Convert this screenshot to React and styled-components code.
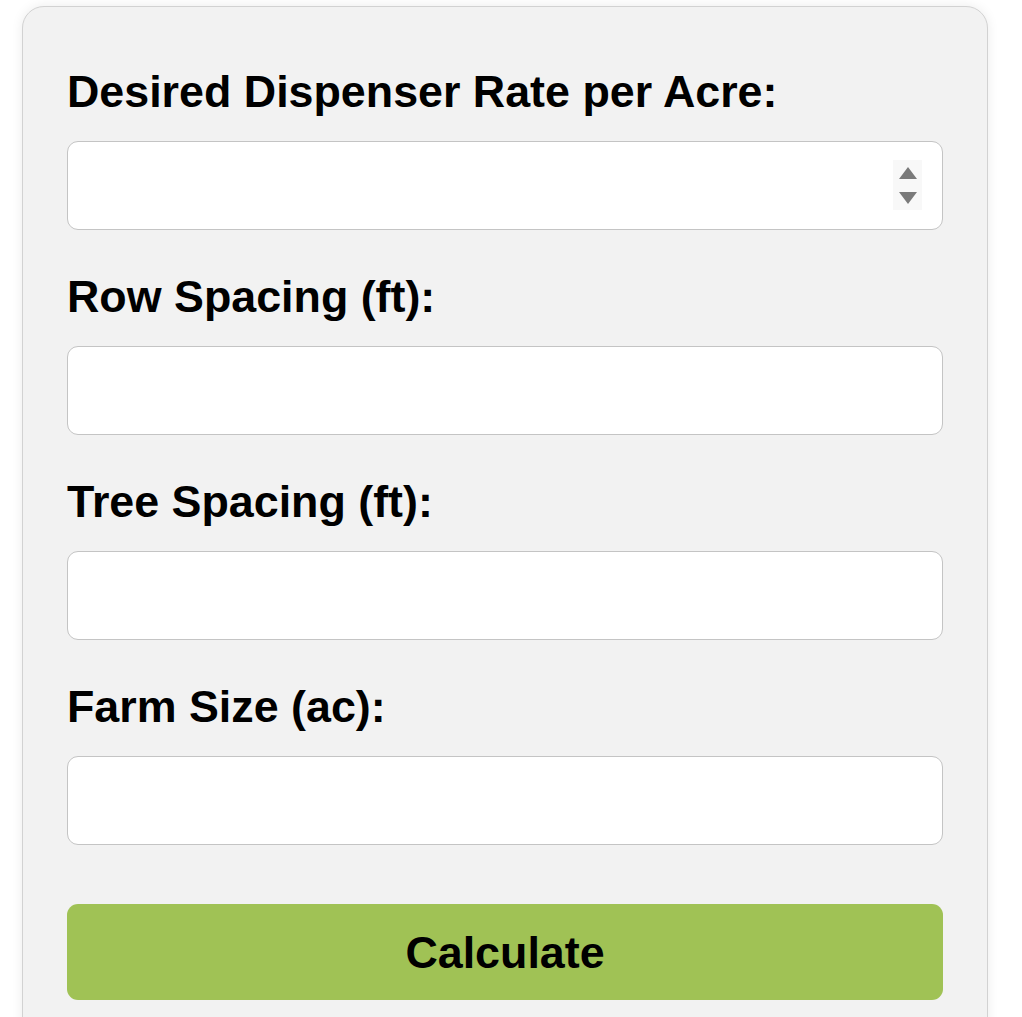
import React, { useState } from "react";
import styled, { createGlobalStyle } from "styled-components";

const GlobalStyle = createGlobalStyle`
    body {
        margin: 0;
        background: #ffffff;
        font-family: "Liberation Sans", Arial, sans-serif;
    }
`;

const fields = [
    { id: "rate", label: "Desired Dispenser Rate per Acre:", spinner: true },
    { id: "row", label: "Row Spacing (ft):" },
    { id: "tree", label: "Tree Spacing (ft):" },
    { id: "farm", label: "Farm Size (ac):" },
];

const App = () => {
    const [values, setValues] = useState({});

    const changeHandler = (id) => (e) => {
        setValues({ ...values, [id]: e.target.value });
    };

    return (
        <>
            <GlobalStyle />
            <Page>
                <Card>
                    {fields.map((f) => (
                        <Group key={f.id}>
                            <Label htmlFor={f.id}>{f.label}</Label>
                            <InputWrap>
                                <Input
                                    id={f.id}
                                    type="text"
                                    value={values[f.id] || ""}
                                    onChange={changeHandler(f.id)}
                                />
                                {f.spinner && (
                                    <Spinner>
                                        <Arrow up />
                                        <Arrow />
                                    </Spinner>
                                )}
                            </InputWrap>
                        </Group>
                    ))}
                    <Button>Calculate</Button>
                </Card>
            </Page>
        </>
    );
};

const Page = styled.div`
    padding: 6px 34px 0 22px;
`;

const Card = styled.div`
    box-sizing: border-box;
    width: 966px;
    height: 1040px;
    background: #f2f2f2;
    border: 1px solid #d2d2d2;
    border-radius: 22px;
    box-shadow: 0 0 12px rgba(0, 0, 0, 0.08);
    padding: 59px 44px 0 44px;
`;

const Group = styled.div`
    display: flex;
    flex-direction: column;
    margin-bottom: 41px;
`;

const Label = styled.label`
    display: block;
    font-size: 44.8px;
    line-height: 51px;
    font-weight: 700;
    color: #000;
    margin-bottom: 24px;
`;

const InputWrap = styled.div`
    position: relative;
`;

const Input = styled.input`
    box-sizing: border-box;
    display: block;
    width: 100%;
    height: 89px;
    background: #fff;
    border: 1px solid #c4c4c4;
    border-radius: 11px;
    font-family: "Liberation Sans", Arial, sans-serif;
    font-size: 40px;
    padding: 0 24px;
    outline: none;
`;

const Spinner = styled.div`
    position: absolute;
    top: 19px;
    right: 21px;
    width: 29px;
    height: 50px;
    background: #f8f8f8;
    display: flex;
    flex-direction: column;
    align-items: center;
    justify-content: space-around;
`;

const Arrow = styled.span`
    width: 0;
    height: 0;
    border-left: 9px solid transparent;
    border-right: 9px solid transparent;
    ${(p) =>
        p.up
            ? `border-bottom: 12px solid #7a7a7a;`
            : `border-top: 12px solid #7a7a7a;`}
`;

const Button = styled.button`
    display: block;
    width: 100%;
    height: 96px;
    margin-top: 59px;
    background: #a0c255;
    border: none;
    border-radius: 11px;
    font-family: "Liberation Sans", Arial, sans-serif;
    font-size: 44.8px;
    font-weight: 700;
    color: #000;
    cursor: pointer;
`;

export default App;
